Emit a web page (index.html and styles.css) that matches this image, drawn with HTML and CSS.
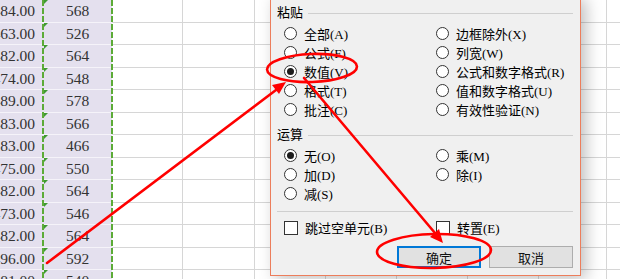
FILE: index.html
```html
<!DOCTYPE html>
<html lang="zh-CN">
  <head>
    <meta charset="UTF-8" />
    <title>选择性粘贴</title>
    <link rel="stylesheet" href="styles.css">
  </head>
  <body>
    <div class="screen">
      <div class="sheet">
        <div class="row"><span class="cell a">484.00</span><span class="cell b">568</span><i class="cell"></i><i class="cell"></i><i class="cell"></i><i class="cell"></i><i class="cell"></i><i class="cell"></i><i class="cell"></i><i class="cell"></i></div>
        <div class="row"><span class="cell a">463.00</span><span class="cell b">526</span><i class="cell"></i><i class="cell"></i><i class="cell"></i><i class="cell"></i><i class="cell"></i><i class="cell"></i><i class="cell"></i><i class="cell"></i></div>
        <div class="row"><span class="cell a">482.00</span><span class="cell b">564</span><i class="cell"></i><i class="cell"></i><i class="cell"></i><i class="cell"></i><i class="cell"></i><i class="cell"></i><i class="cell"></i><i class="cell"></i></div>
        <div class="row"><span class="cell a">474.00</span><span class="cell b">548</span><i class="cell"></i><i class="cell"></i><i class="cell"></i><i class="cell"></i><i class="cell"></i><i class="cell"></i><i class="cell"></i><i class="cell"></i></div>
        <div class="row"><span class="cell a">489.00</span><span class="cell b">578</span><i class="cell"></i><i class="cell"></i><i class="cell"></i><i class="cell"></i><i class="cell"></i><i class="cell"></i><i class="cell"></i><i class="cell"></i></div>
        <div class="row"><span class="cell a">483.00</span><span class="cell b">566</span><i class="cell"></i><i class="cell"></i><i class="cell"></i><i class="cell"></i><i class="cell"></i><i class="cell"></i><i class="cell"></i><i class="cell"></i></div>
        <div class="row"><span class="cell a">383.00</span><span class="cell b">466</span><i class="cell"></i><i class="cell"></i><i class="cell"></i><i class="cell"></i><i class="cell"></i><i class="cell"></i><i class="cell"></i><i class="cell"></i></div>
        <div class="row"><span class="cell a">475.00</span><span class="cell b">550</span><i class="cell"></i><i class="cell"></i><i class="cell"></i><i class="cell"></i><i class="cell"></i><i class="cell"></i><i class="cell"></i><i class="cell"></i></div>
        <div class="row"><span class="cell a">482.00</span><span class="cell b">564</span><i class="cell"></i><i class="cell"></i><i class="cell"></i><i class="cell"></i><i class="cell"></i><i class="cell"></i><i class="cell"></i><i class="cell"></i></div>
        <div class="row"><span class="cell a">473.00</span><span class="cell b">546</span><i class="cell"></i><i class="cell"></i><i class="cell"></i><i class="cell"></i><i class="cell"></i><i class="cell"></i><i class="cell"></i><i class="cell"></i></div>
        <div class="row"><span class="cell a">482.00</span><span class="cell b">564</span><i class="cell"></i><i class="cell"></i><i class="cell"></i><i class="cell"></i><i class="cell"></i><i class="cell"></i><i class="cell"></i><i class="cell"></i></div>
        <div class="row"><span class="cell a">496.00</span><span class="cell b">592</span><i class="cell"></i><i class="cell"></i><i class="cell"></i><i class="cell"></i><i class="cell"></i><i class="cell"></i><i class="cell"></i><i class="cell"></i></div>
        <div class="row"><span class="cell a">481.00</span><span class="cell b">540</span><i class="cell"></i><i class="cell"></i><i class="cell"></i><i class="cell"></i><i class="cell"></i><i class="cell"></i><i class="cell"></i><i class="cell"></i></div>
      </div>

      <!-- copy selection marquee -->
      <div class="marquee"></div>

      <div class="dialog">
        <div class="group-title"><span>粘贴</span></div>
        <div class="options">
          <label class="opt"><span class="radio"></span>全部(A)</label>
          <label class="opt"><span class="radio"></span>边框除外(X)</label>
          <label class="opt"><span class="radio"></span>公式(F)</label>
          <label class="opt"><span class="radio"></span>列宽(W)</label>
          <label class="opt"><span class="radio on"></span>数值(V)</label>
          <label class="opt"><span class="radio"></span>公式和数字格式(R)</label>
          <label class="opt"><span class="radio"></span>格式(T)</label>
          <label class="opt"><span class="radio"></span>值和数字格式(U)</label>
          <label class="opt"><span class="radio"></span>批注(C)</label>
          <label class="opt"><span class="radio"></span>有效性验证(N)</label>
        </div>

        <div class="group-title section"><span>运算</span></div>
        <div class="options">
          <label class="opt"><span class="radio on"></span>无(O)</label>
          <label class="opt"><span class="radio"></span>乘(M)</label>
          <label class="opt"><span class="radio"></span>加(D)</label>
          <label class="opt"><span class="radio"></span>除(I)</label>
          <label class="opt"><span class="radio"></span>减(S)</label>
        </div>

        <div class="rule"></div>

        <div class="options checks">
          <label class="opt"><span class="check"></span>跳过空单元(B)</label>
          <label class="opt"><span class="check"></span>转置(E)</label>
        </div>

        <div class="buttons">
          <button class="btn btn-default">确定</button>
          <button class="btn">取消</button>
        </div>
      </div>

      <svg class="marks" width="620" height="279" viewBox="0 0 620 279">
        <g fill="none" stroke="#ff0000" stroke-width="2.6" stroke-linecap="round">
          <ellipse cx="312" cy="68" rx="45" ry="14" transform="rotate(-2 312 68)" />
          <ellipse cx="434" cy="251" rx="57" ry="17" transform="rotate(-1 434 251)" />
          <line x1="47" y1="263" x2="276" y2="90" />
          <line x1="304" y1="78" x2="435" y2="233" />
        </g>
        <g fill="#ff0000">
          <polygon points="286,82 279,94 272,85" />
          <polygon points="443,243 430,237 439,229" />
        </g>
      </svg>
    </div>
  </body>
</html>
```

FILE: styles.css
```css
* {
  margin: 0;
  padding: 0;
  box-sizing: border-box;
}

body {
  background: #fff;
  font-family: "Liberation Serif", "Noto Sans CJK SC", serif;
  overflow: hidden;
}

.screen {
  position: relative;
  width: 620px;
  height: 279px;
  overflow: hidden;
}

/* spreadsheet */
.sheet {
  margin-left: -30px;
}

.row {
  display: grid;
  grid-template-columns: 73px 69px 71px 72px 71px 71px 71px 71px 68px 60px;
  height: 22px;
}

.row:nth-child(odd) {
  height: 23px;
}

.cell {
  border-right: 1px solid #d6d6d6;
  border-bottom: 1px solid #d6d6d6;
}

.a,
.b {
  position: relative;
  display: flex;
  align-items: center;
  background: #e4e0ee;
  border-right: none;
  border-bottom-color: #f5f3f9;
  font-size: 15.5px;
  color: #333;
}

.a {
  justify-content: flex-end;
  padding-right: 8px;
}

.b {
  justify-content: center;
}

/* green "number stored as text" marker */
.b::before {
  content: "";
  position: absolute;
  top: 0;
  left: 1px;
  border-top: 4px solid #3f9a31;
  border-right: 4px solid transparent;
}

.marquee {
  position: absolute;
  left: 42px;
  top: 0;
  width: 71px;
  height: 100%;
  background:
    repeating-linear-gradient(180deg, #5cab37 0 6px, transparent 6px 8px) left top / 2px 100% no-repeat,
    repeating-linear-gradient(180deg, #5cab37 0 6px, transparent 6px 8px) right top / 2px 100% no-repeat;
}

/* paste special dialog */
.dialog {
  position: absolute;
  left: 270px;
  top: -4px;
  width: 311px;
  height: 280px;
  padding: 9px 7px 0 6px;
  display: flex;
  flex-direction: column;
  background: #f0f0f0;
  border: 1px solid #ec7d5b;
  box-shadow: 5px 3px 15px rgba(0, 0, 0, 0.25);
  font-size: 13px;
  color: #000;
}

.group-title {
  display: flex;
  align-items: center;
  gap: 5px;
  height: 14px;
  line-height: 14px;
}

.group-title::after {
  content: "";
  flex: 1;
  border-top: 1px solid #cfcfcf;
}

.group-title.section {
  margin-top: 9px;
}

.options {
  display: grid;
  grid-template-columns: 152px 1fr;
  grid-auto-rows: 19px;
  margin-top: 4px;
  padding-left: 7px;
}

.opt {
  display: flex;
  align-items: center;
  gap: 7px;
  white-space: nowrap;
}

.radio,
.check {
  flex-shrink: 0;
  width: 13px;
  height: 13px;
  background: #fff;
  border: 1px solid #333;
}

.radio {
  display: flex;
  align-items: center;
  justify-content: center;
  border-radius: 50%;
}

.radio.on::after {
  content: "";
  width: 7px;
  height: 7px;
  border-radius: 50%;
  background: #1c1c1c;
}

.rule {
  margin-top: 8px;
  border-top: 1px solid #cfcfcf;
}

.options.checks {
  margin-top: 6px;
}

.check {
  width: 14px;
  height: 14px;
}

.buttons {
  display: flex;
  justify-content: flex-end;
  gap: 8px;
  margin-top: 9px;
}

.btn {
  width: 84px;
  height: 22px;
  background: #e1e1e1;
  border: 1px solid #adadad;
  font-family: "Noto Sans CJK SC", sans-serif;
  font-size: 13px;
  color: #111;
}

.btn-default {
  border-color: #0078d7;
  box-shadow: inset 0 0 0 1px #0078d7;
}

.marks {
  position: absolute;
  left: 0;
  top: 0;
  pointer-events: none;
}
```
